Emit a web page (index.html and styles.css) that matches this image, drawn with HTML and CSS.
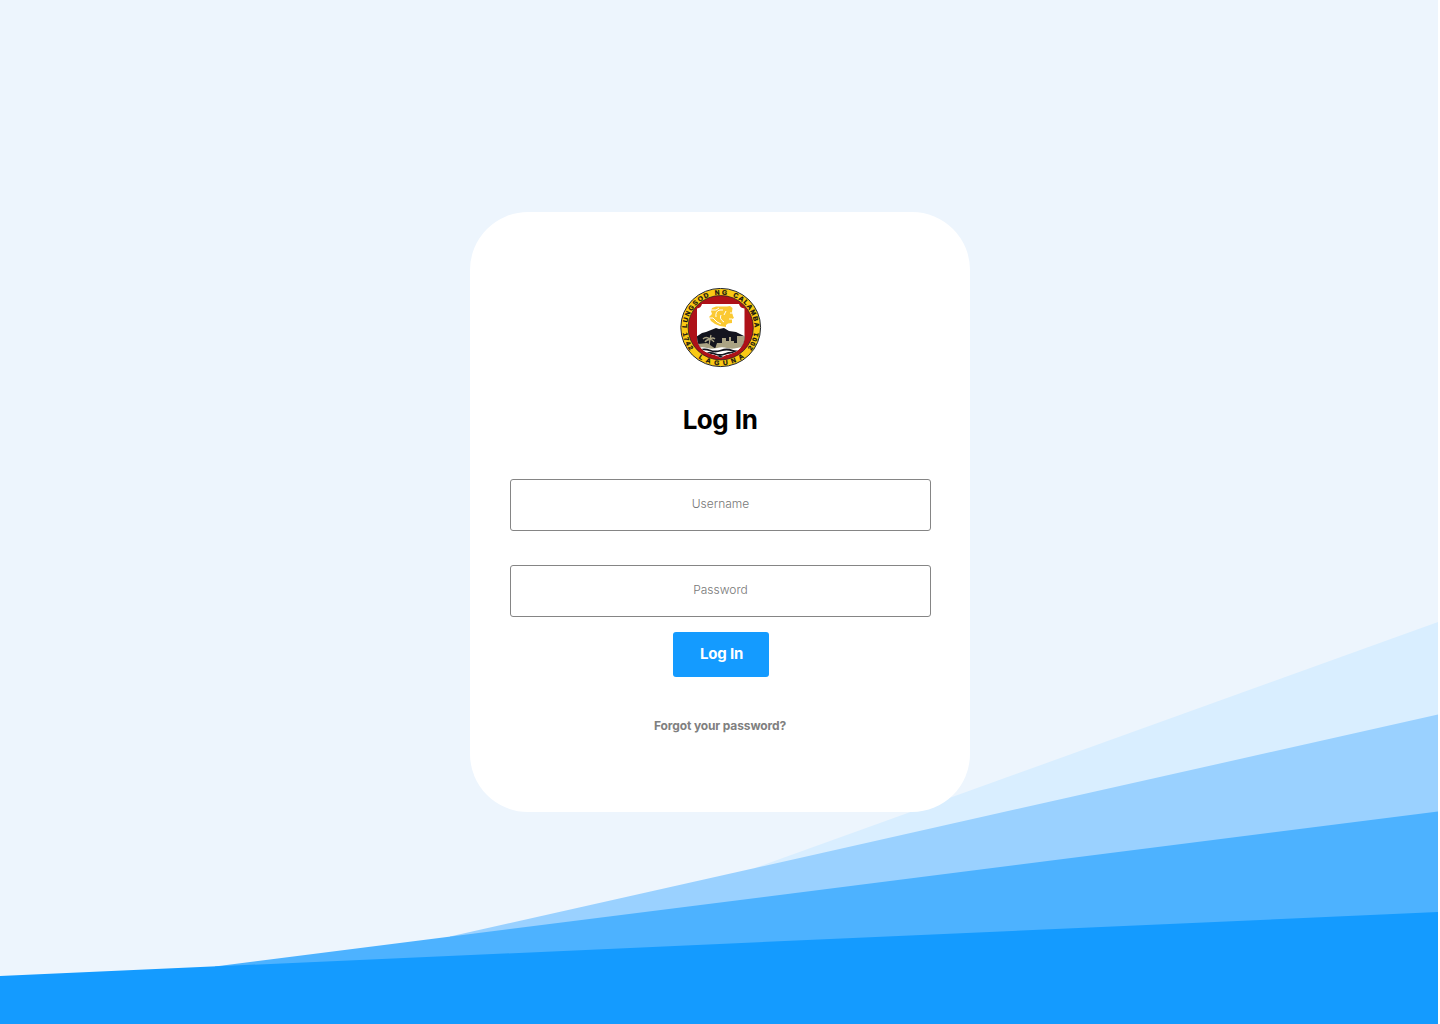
FILE: index.html
```html
<!DOCTYPE html>
<html lang="en">
<head>
<meta charset="utf-8">
<title>Log In</title>
<link rel="stylesheet" href="styles.css">
</head>
<body>
<main class="page">
  <svg class="waves" viewBox="0 0 1440 1024" aria-hidden="true">
    <polygon fill="#d9eeff" points="755,868 1438,622 1438,1024 755,1024"/>
    <polygon fill="#9ad1ff" points="450,936.5 1438,714.5 1438,1024 450,1024"/>
    <polygon fill="#4db2ff" points="215,966.5 1438,811.5 1438,1024 215,1024"/>
    <polygon fill="#149bff" points="0,976 1438,912 1438,1024 0,1024"/>
  </svg>
  <form class="card">
    <svg class="seal" viewBox="0 0 82 80" role="img" aria-label="Lungsod ng Calamba seal">
      <defs>
        <path id="arc-top" d="M7 43A33.9 33.9 0 1 1 74.6 43"/>
        <path id="arc-left" d="M2.4 40A38.2 38.2 0 0 0 40.6 78.2"/>
        <path id="arc-bottom" d="M2.6 39A38.2 38.2 0 0 0 79 39"/>
        <path id="arc-right" d="M40.8 77.8A38.2 38.2 0 0 0 79 39.6"/>
        <clipPath id="shield-clip"><path d="M17 20.5Q21 20 22 16H59Q60 20 64.5 20.5V49C64.5 59 57 64 50 66Q44 67 41 70Q37 67 31 66C24 64 17 59 17 49Z"/></clipPath>
      </defs>
      <ellipse cx="40.7" cy="39.5" rx="39.9" ry="39.1" fill="#fac914" stroke="#242832" stroke-width="1"/>
      <ellipse cx="40.7" cy="39.7" rx="32.6" ry="32.2" fill="#ae1118" stroke="#302225" stroke-width=".8"/>
      <g clip-path="url(#shield-clip)">
        <path fill="#fff" d="M16 15H66V71H16Z"/>
        <path fill="#14151f" d="M16 49L22 45L26 44L31 42L36 40L39 41L44 40L49 43L56 44L66 49V60H16Z"/>
        <path fill="#aaa384" d="M35 61L37 55H42V50H46V53H49V49H51V53H54V55H57V48H66V61Z"/>
        <path fill="#aaa384" d="M18 56L27 55L36 61H20Z"/>
        <path fill="none" stroke="#aaa384" stroke-width="1.3" d="M29 58L30 51M30 51Q26 48 23 51M30 51Q26 52 25 54M30 51L31 47M30 51Q33 49 35 51M30 51Q33 52 34 54"/>
        <path fill="#fff" d="M17 60Q22 58.5 27 60T37 60T47 60T57 60T66 59V71H16Z"/>
        <path fill="none" stroke="#14151f" stroke-width="1.8" d="M20 62Q25 60.5 30 62.5T41 62.5T52 62.5T62 62M25 66Q30 64 35 66T45 66T56 65M35 69.5Q39 68 43 69.5"/>
      </g>
      <g fill="#fbc932">
        <path d="M32 20L36 18.5H47L50 18L52.5 20L52 24L53 28L54 30L52 31V35L48 35.5L46 37L46 39L40 38L35 36L31 33L29 29L32 26L31 23Z"/>
        <path fill="none" stroke="#fff" stroke-width="1" d="M31 22H36L39 20M29 30H33L37 34L41 36M36 29Q35 23 40 22H43M41 27Q39 31 44 34M46 23L44 27M50 25H54M49 31H52"/>
      </g>
      <g class="seal-text">
        <text><textPath href="#arc-top" startOffset="3" textLength="41">LUNGSOD</textPath></text>
        <text><textPath href="#arc-top" startOffset="50" textLength="12">NG</textPath></text>
        <text><textPath href="#arc-top" startOffset="68" textLength="40">CALAMBA</textPath></text>
        <text><textPath href="#arc-left" startOffset="5" textLength="19">1742</textPath></text>
        <text><textPath href="#arc-bottom" startOffset="36" textLength="49">LAGUNA</textPath></text>
        <text><textPath href="#arc-right" startOffset="35" textLength="19">2001</textPath></text>
      </g>
    </svg>
    <h1 class="title">Log In</h1>
    <div class="fields">
      <input class="field" type="text" placeholder="Username" aria-label="Username">
      <input class="field" type="password" placeholder="Password" aria-label="Password">
    </div>
    <button class="submit" type="button">Log In</button>
    <a class="forgot" href="#">Forgot your password?</a>
  </form>
</main>
</body>
</html>
```
FILE: styles.css
```css
* { box-sizing: border-box; }
body { margin: 0; background: #fff; font-family: Inter, "Liberation Sans", sans-serif; }
.page {
  position: relative;
  display: flex;
  align-items: center;
  width: 1438px;
  height: 1024px;
  padding-left: 470px;
  overflow: hidden;
  background: #edf5fd;
}
.waves { position: absolute; top: 0; left: 0; width: 1440px; height: 1024px; }
.card {
  position: relative;
  display: flex;
  flex: none;
  flex-direction: column;
  align-items: center;
  width: 500px;
  height: 600px;
  padding: 76px 39px 0 40px;
  border-radius: 58px;
  background: #fff;
}
.seal { display: block; width: 82px; height: 80px; flex: none; }
.seal-text text {
  font: 700 6.6px "Liberation Sans", sans-serif;
  fill: #111;
  stroke: #111;
  stroke-width: .25px;
}
.title {
  margin: 35px 0 0;
  padding-right: 1px;
  font-size: 26px;
  line-height: 34px;
  font-weight: 700;
  letter-spacing: -.5px;
  word-spacing: 1px;
  color: #000;
}
.fields { display: flex; flex-direction: column; gap: 34px; width: 421px; margin-top: 42px; }
.field {
  width: 421px;
  height: 52px;
  padding: 0 0 3px;
  border: 1px solid #858585;
  border-radius: 3px;
  background: #fff;
  font: 300 12px/20px Inter, sans-serif;
  text-align: center;
  outline: none;
}
.field::placeholder { color: #777; opacity: 1; }
.submit {
  width: 96px;
  height: 45px;
  margin: 15px 0 0 1px;
  padding: 0 0 1px 1px;
  border: 0;
  border-radius: 3px;
  background: #149bff;
  color: #fff;
  font: 700 15px/20px Inter, sans-serif;
  letter-spacing: -.2px;
}
.forgot {
  margin-top: 39px;
  padding-right: 1px;
  color: #808080;
  font-size: 12px;
  line-height: 20px;
  font-weight: 700;
  letter-spacing: -.13px;
  text-decoration: none;
}
```
